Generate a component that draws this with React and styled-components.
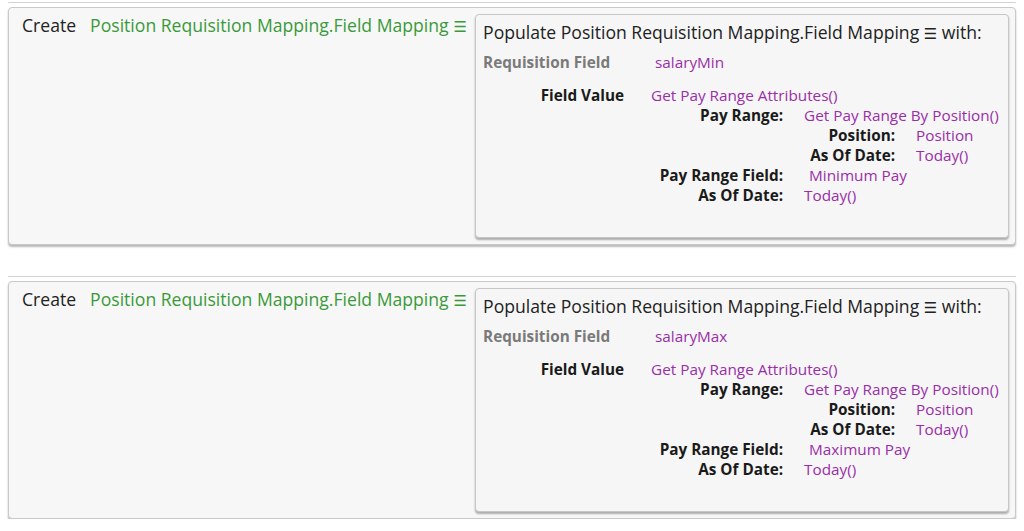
import React from "react";
import styled, { createGlobalStyle } from "styled-components";

const GlobalStyle = createGlobalStyle`
  html, body {
    margin: 0;
    padding: 0;
    background: #ffffff;
  }
  body {
    font-family: "Open Sans", "Noto Sans", sans-serif;
    color: #1d1d1d;
  }
`;

const Page = styled.div`
  display: flex;
  flex-direction: column;
  gap: 31px;
  padding: 2px 8px 0 8px;
`;

const Block = styled.section`
  border-top: 1px solid #d4d4d4;
  padding-top: 4px;
`;

const Card = styled.div`
  display: flex;
  align-items: flex-start;
  gap: 8px;
  height: 238px;
  box-sizing: border-box;
  padding: 6px 6px 6px 13px;
  background: #f7f7f7;
  border: 1px solid #c9c9c9;
  border-radius: 4px;
  box-shadow: 0 2px 2px rgba(0, 0, 0, 0.28);
`;

const Action = styled.div`
  display: flex;
  gap: 14px;
  padding-top: 0;
  font-size: 17.6px;
  line-height: 22px;
  white-space: nowrap;
`;

const Verb = styled.span`
  color: #222;
`;

const Target = styled.span`
  color: #3a9a3a;
`;

const Menu = styled.span`
  font-family: "DejaVu Sans", sans-serif;
  font-size: 15px;
  margin-left: ${(p) => p.$space || 0}px;
`;

const Inner = styled.div`
  flex: 1;
  align-self: stretch;
  box-sizing: border-box;
  padding: 6px 7px;
  background: #f6f6f6;
  border: 1px solid #c6c6c6;
  border-radius: 4px;
  box-shadow: 0 2px 2px rgba(0, 0, 0, 0.3);
`;

const Heading = styled.div`
  font-size: 17.6px;
  line-height: 22px;
  color: #222;
  white-space: nowrap;
`;

const Row = styled.div`
  display: flex;
  align-items: baseline;
  font-size: 15.3px;
  line-height: 20px;
  white-space: nowrap;
  margin-top: ${(p) => p.$top || 0}px;
`;

const Label = styled.span`
  width: ${(p) => p.$width}px;
  flex: none;
  text-align: ${(p) => (p.$left ? "left" : "right")};
  font-weight: 700;
  color: ${(p) => (p.$muted ? "#7a7a7a" : "#1a1a1a")};
`;

const Value = styled.span`
  margin-left: ${(p) => p.$gap}px;
  color: #9a2ea8;
`;

const LEVELS = [
  { width: 141, gap: 27 },
  { width: 300, gap: 21 },
  { width: 412, gap: 21 },
];

function Param({ node, depth = 0, top = 0 }) {
  const level = LEVELS[depth];
  return (
    <>
      <Row $top={top}>
        <Label $width={level.width}>{node.label}</Label>
        <Value $gap={node.gap ?? level.gap}>{node.value}</Value>
      </Row>
      {node.params &&
        node.params.map((child, i) => (
          <Param key={i} node={child} depth={depth + 1} />
        ))}
    </>
  );
}

const payRangeValue = (payField) => ({
  label: "Field Value",
  value: "Get Pay Range Attributes()",
  params: [
    {
      label: "Pay Range:",
      value: "Get Pay Range By Position()",
      params: [
        { label: "Position:", value: "Position" },
        { label: "As Of Date:", value: "Today()" },
      ],
    },
    { label: "Pay Range Field:", value: payField, gap: 26 },
    { label: "As Of Date:", value: "Today()" },
  ],
});

const mappings = [
  { field: "salaryMin", value: payRangeValue("Minimum Pay") },
  { field: "salaryMax", value: payRangeValue("Maximum Pay") },
];

const entity = "Position Requisition Mapping.Field Mapping";

export default function App() {
  return (
    <>
      <GlobalStyle />
      <Page>
        {mappings.map((m) => (
          <Block key={m.field}>
            <Card>
              <Action>
                <Verb>Create</Verb>
                <Target>
                  {entity}
                  <Menu $space={5}>☰</Menu>
                </Target>
              </Action>
              <Inner>
                <Heading>
                  Populate {entity} <Menu>☰</Menu> with:
                </Heading>
                <Row $top={7}>
                  <Label $width={172} $left $muted>
                    Requisition Field
                  </Label>
                  <Value $gap={0}>{m.field}</Value>
                </Row>
                <Param node={m.value} top={13} />
              </Inner>
            </Card>
          </Block>
        ))}
      </Page>
    </>
  );
}
